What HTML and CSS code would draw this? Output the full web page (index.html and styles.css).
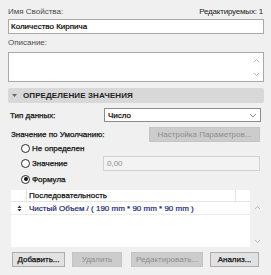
FILE: index.html
```html
<!DOCTYPE html>
<html lang="ru">
<head>
<meta charset="utf-8">
<link rel="stylesheet" href="styles.css">
</head>
<body>
<div class="panel">
  <div class="top-row">
    <span class="lbl">Имя Свойства:</span>
    <span class="count">Редактируемых: 1</span>
  </div>
  <div class="field name">Количество Кирпича</div>
  <div class="lbl desc-lbl">Описание:</div>
  <div class="textarea">
    <div class="vscroll">
      <svg width="7" height="5" viewBox="0 0 7 5"><polyline points="1,4 3.5,1.5 6,4" fill="none" stroke="#b8b8b8" stroke-width="1"/></svg>
      <svg width="7" height="5" viewBox="0 0 7 5"><polyline points="1,1 3.5,3.5 6,1" fill="none" stroke="#b8b8b8" stroke-width="1"/></svg>
    </div>
  </div>

  <div class="section-head">
    <svg class="tri" width="5" height="4" viewBox="0 0 5 4"><polygon points="0,0 5,0 2.5,3" fill="#666"/></svg>
    <span>ОПРЕДЕЛЕНИЕ ЗНАЧЕНИЯ</span>
  </div>

  <div class="type-row">
    <span class="lbl dark">Тип данных:</span>
    <div class="select">
      <span class="strong">Число</span>
      <svg width="8" height="5" viewBox="0 0 8 5"><polyline points="1,1 4,4 7,1" fill="none" stroke="#8a8a8a" stroke-width="1"/></svg>
    </div>
  </div>

  <div class="default-row">
    <span class="lbl dark">Значение по Умолчанию:</span>
    <div class="btn disabled wide">Настройка Параметров...</div>
  </div>

  <div class="radio-row r1">
    <span class="radio"></span><span class="dark">Не определен</span>
  </div>
  <div class="radio-row r2">
    <span class="radio"></span><span class="dark rlabel">Значение</span>
    <div class="value-input">0,00</div>
  </div>
  <div class="radio-row r3">
    <span class="radio checked"></span><span class="dark">Формула</span>
  </div>

  <div class="table-wrap">
    <div class="table">
      <div class="thead">
        <div class="c0"></div>
        <div class="c1 strong">Последовательность</div>
        <div class="c2"></div>
      </div>
      <div class="trow">
        <div class="c0">
          <svg width="5" height="7" viewBox="0 0 5 7"><polygon points="0.5,3 4.5,3 2.5,0.5" fill="#333"/><polygon points="0.5,4 4.5,4 2.5,6.5" fill="#333"/></svg>
        </div>
        <div class="c1 formula">Чистый Объем / ( 190 mm * 90 mm * 90 mm )</div>
      </div>
    </div>
    <div class="tscroll">
      <svg width="7" height="5" viewBox="0 0 7 5"><polyline points="1,4 3.5,1.5 6,4" fill="none" stroke="#b8b8b8" stroke-width="1"/></svg>
      <svg width="7" height="5" viewBox="0 0 7 5"><polyline points="1,1 3.5,3.5 6,1" fill="none" stroke="#b8b8b8" stroke-width="1"/></svg>
    </div>
  </div>

  <div class="buttons">
    <div class="btn b-add strong">Добавить...</div>
    <div class="btn disabled b-del">Удалить</div>
    <div class="btn disabled b-edit">Редактировать...</div>
    <div class="btn b-an strong">Анализ...</div>
  </div>
</div>
</body>
</html>
```
FILE: styles.css
```css
html, body {
  margin: 0;
  padding: 0;
  background: #f0f0f0;
}
body {
  font-family: "Liberation Sans", Arial, sans-serif;
  font-size: 8px;
  color: #444;
  width: 271px;
  height: 275px;
  overflow: hidden;
}
.panel {
  padding: 0 7px 0 8px;
}
.lbl {
  color: #4a4a4a;
}
.dark, .strong {
  color: #111;
  -webkit-text-stroke: 0.25px #111;
}
.top-row {
  display: flex;
  justify-content: space-between;
  align-items: center;
  height: 10px;
  margin-top: 7px;
  line-height: 10px;
}
.count {
  color: #222;
  padding-right: 1px;
  letter-spacing: -0.2px;
}
.field {
  box-sizing: border-box;
  background: #fff;
  border: 1px solid #a9a9a9;
}
.name {
  margin-top: 2px;
  height: 15px;
  line-height: 13px;
  padding-left: 2px;
  color: #000;
  -webkit-text-stroke: 0.2px #000;
}
.desc-lbl {
  display: block;
  margin-top: 4px;
  height: 10px;
  line-height: 10px;
}
.textarea {
  box-sizing: border-box;
  margin-top: 4px;
  height: 30px;
  background: #fff;
  border: 1px solid #a9a9a9;
  display: flex;
  justify-content: flex-end;
}
.vscroll, .tscroll {
  width: 13px;
  display: flex;
  flex-direction: column;
  align-items: center;
  justify-content: space-between;
}
.vscroll {
  padding: 5px 0 4px;
}
.vscroll svg, .tscroll svg { display: block; }
.section-head {
  margin-top: 6px;
  height: 15px;
  background: #d8d8d8;
  border-radius: 2px;
  display: flex;
  align-items: center;
  font-weight: bold;
  color: #222;
  letter-spacing: 0.1px;
}
.section-head .tri {
  margin: 0 6px 0 4px;
}
.type-row {
  display: flex;
  align-items: center;
  margin-top: 5px;
  height: 14px;
}
.type-row .lbl {
  width: 94px;
  padding-left: 2px;
}
.select {
  box-sizing: border-box;
  width: 157px;
  height: 14px;
  background: #fff;
  border: 1px solid #8c8c8c;
  display: flex;
  align-items: center;
  justify-content: space-between;
  padding: 0 3px 0 3px;
  color: #000;
}
.default-row {
  display: flex;
  align-items: center;
  justify-content: space-between;
  margin-top: 5px;
  height: 15px;
  padding-left: 3px;
  padding-right: 4px;
}
.btn {
  box-sizing: border-box;
  height: 15px;
  border: 1px solid #adadad;
  background: #e1e1e1;
  color: #111;
  display: flex;
  align-items: center;
  justify-content: center;
}
.btn.disabled {
  background: #cccccc;
  border-color: #c4c4c4;
  color: #8d8d8d;
}
.wide {
  width: 111px;
}
.radio-row {
  display: flex;
  align-items: center;
  padding-left: 13px;
}
.r1 { height: 13px; }
.r2 { height: 15px; margin-top: 1px; }
.r3 { height: 14px; margin-top: 1px; }
.radio {
  box-sizing: border-box;
  width: 9px;
  height: 9px;
  border-radius: 50%;
  border: 1px solid #2a2a2a;
  background: #fff;
  margin-right: 2px;
  position: relative;
}
.radio.checked::after {
  content: "";
  position: absolute;
  left: 1.5px;
  top: 1.5px;
  width: 4px;
  height: 4px;
  border-radius: 50%;
  background: #111;
}
.rlabel {
  width: 71px;
}
.value-input {
  box-sizing: border-box;
  width: 157px;
  height: 15px;
  border: 1px solid #d2d2d2;
  background: #f3f3f3;
  color: #8a8a8a;
  line-height: 13px;
  padding-left: 3px;
}
.table-wrap {
  display: flex;
  margin-top: 4px;
  margin-left: 3px;
  height: 57px;
}
.table {
  width: 239px;
  background: #fff;
}
.thead {
  display: flex;
  height: 11px;
  border-bottom: 1px solid #e4e4e4;
  line-height: 11px;
  color: #111;
}
.thead .c0 {
  width: 15px;
  border-right: 1px solid #e4e4e4;
}
.thead .c1 {
  width: 206px;
  padding-left: 2px;
  border-right: 1px solid #e4e4e4;
}
.thead .c2 {
  flex: 1;
}
.trow {
  display: flex;
  height: 12px;
  border-bottom: 1px solid #ececec;
  align-items: center;
}
.trow .c0 {
  width: 16px;
  display: flex;
  justify-content: center;
}
.trow .c1 {
  padding-left: 2px;
}
.formula {
  color: #1c2a6b;
  -webkit-text-stroke: 0.2px #1c2a6b;
}
.tscroll {
  padding: 15px 0 3px;
  margin-left: 1px;
}
.buttons {
  display: flex;
  margin-top: 5px;
  padding-left: 4px;
}
.buttons .btn { height: 15px; }
.b-add { width: 53px; }
.b-del { width: 50px; margin-left: 7px; }
.b-edit { width: 72px; margin-left: 9px; }
.b-an { width: 49px; margin-left: 7px; }
```
